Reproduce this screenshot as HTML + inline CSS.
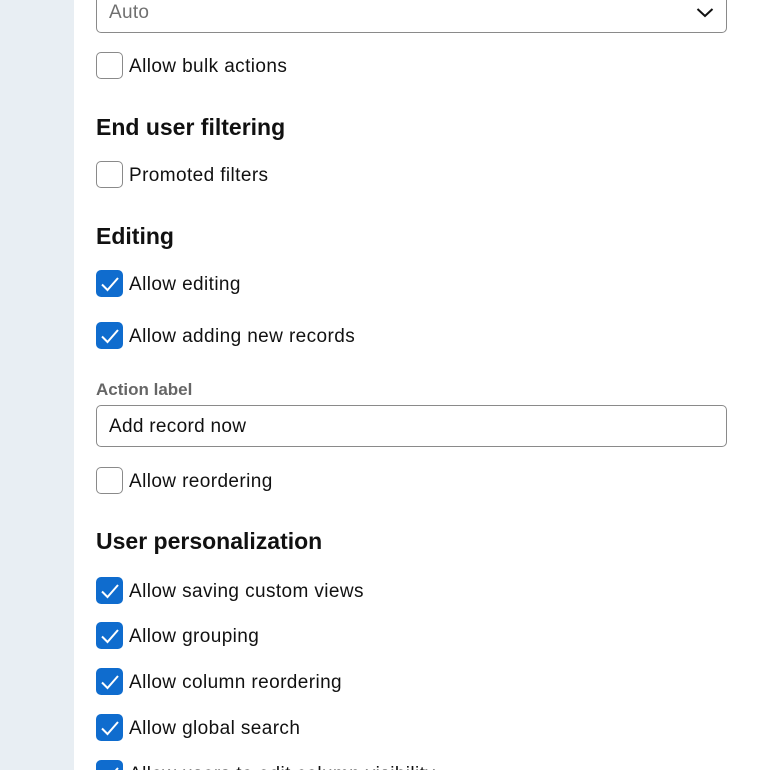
<!DOCTYPE html>
<html><head><meta charset="utf-8"><style>
*{box-sizing:border-box;margin:0;padding:0}
html,body{width:775px;height:780px;background:#fff;overflow:hidden}
body{font-family:"Liberation Sans",sans-serif;color:#111}
#clip{position:absolute;left:0;top:0;width:775px;height:770px;overflow:hidden}
#side{position:absolute;left:0;top:0;width:74px;height:770px;background:#e8eef3}
.a{position:absolute}
.box{position:absolute;left:96px;width:631px;border:1px solid #8a8a8a;border-radius:5px;background:#fff;font-size:19px;padding-left:12px;letter-spacing:0.3px}
.cb{position:absolute;left:96px;width:27px;height:27px;border-radius:5px;border:1px solid #8a8a8a;background:#fff}
.cb.on{background:#0f6cce;border-color:#0f6cce}
.cb svg{position:absolute;left:3px;top:4px}
.lbl{position:absolute;left:129px;font-size:19px;line-height:24px;white-space:nowrap;letter-spacing:0.4px;margin-top:2px}
.h{position:absolute;left:96px;font-size:23px;font-weight:bold;white-space:nowrap;margin-top:1px}
</style></head><body><div id="clip">
<div id="side"></div>
<div class="box" style="top:-12px;height:45px;line-height:47px;color:#707070">Auto
<svg style="position:absolute;right:12px;top:18px" width="18" height="11" viewBox="0 0 18 11"><path d="M1.5 2 L9 9 L16.5 2" fill="none" stroke="#111" stroke-width="2"/></svg></div>

<div class="cb" style="top:52px"></div><div class="lbl" style="top:53px">Allow bulk actions</div>
<div class="h" style="top:113px">End user filtering</div>
<div class="cb" style="top:161px"></div><div class="lbl" style="top:162px">Promoted filters</div>
<div class="h" style="top:222px">Editing</div>
<div class="cb on" style="top:270px"><svg width="20" height="18" viewBox="0 0 20 18"><path d="M2 9.5 L7.5 15 L18 3" fill="none" stroke="#fff" stroke-width="2"/></svg></div><div class="lbl" style="top:271px">Allow editing</div>
<div class="cb on" style="top:322px"><svg width="20" height="18" viewBox="0 0 20 18"><path d="M2 9.5 L7.5 15 L18 3" fill="none" stroke="#fff" stroke-width="2"/></svg></div><div class="lbl" style="top:323px">Allow adding new records</div>
<div class="a" style="left:96px;top:380px;font-size:17px;font-weight:bold;color:#666">Action label</div>
<div class="box" style="top:405px;height:42px;line-height:42px;color:#111">Add record now</div>
<div class="cb" style="top:467px"></div><div class="lbl" style="top:468px">Allow reordering</div>
<div class="h" style="top:527px">User personalization</div>
<div class="cb on" style="top:577px"><svg width="20" height="18" viewBox="0 0 20 18"><path d="M2 9.5 L7.5 15 L18 3" fill="none" stroke="#fff" stroke-width="2"/></svg></div><div class="lbl" style="top:578px">Allow saving custom views</div>
<div class="cb on" style="top:622px"><svg width="20" height="18" viewBox="0 0 20 18"><path d="M2 9.5 L7.5 15 L18 3" fill="none" stroke="#fff" stroke-width="2"/></svg></div><div class="lbl" style="top:623px">Allow grouping</div>
<div class="cb on" style="top:668px"><svg width="20" height="18" viewBox="0 0 20 18"><path d="M2 9.5 L7.5 15 L18 3" fill="none" stroke="#fff" stroke-width="2"/></svg></div><div class="lbl" style="top:669px">Allow column reordering</div>
<div class="cb on" style="top:714px"><svg width="20" height="18" viewBox="0 0 20 18"><path d="M2 9.5 L7.5 15 L18 3" fill="none" stroke="#fff" stroke-width="2"/></svg></div><div class="lbl" style="top:715px">Allow global search</div>
<div class="cb on" style="top:760px"><svg width="20" height="18" viewBox="0 0 20 18"><path d="M2 9.5 L7.5 15 L18 3" fill="none" stroke="#fff" stroke-width="2"/></svg></div><div class="lbl" style="top:761px">Allow users to edit column visibility</div>
</div></body></html>
